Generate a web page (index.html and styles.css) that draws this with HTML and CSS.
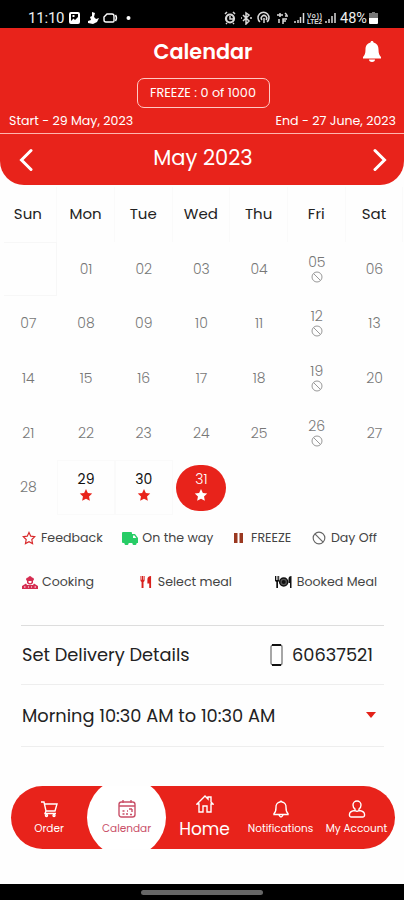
FILE: index.html
```html
<!DOCTYPE html>
<html lang="en">
<head>
<meta charset="utf-8">
<title>Calendar</title>
<link rel="stylesheet" href="styles.css">
</head>
<body>
<svg width="0" height="0" class="defs">
  <symbol id="star" viewBox="0 0 24 24"><path d="M12 1.500l3.200 6.900 7.500.9-5.500 5.200 1.400 7.500L12 18.300 5.400 22l1.400-7.500L1.300 9.300l7.500-.9z"/></symbol>
  <symbol id="off" viewBox="0 0 24 24"><circle cx="12" cy="12" r="10" fill="none" stroke="currentColor" stroke-width="2"/><path d="M5 5l14 14" stroke="currentColor" stroke-width="2"/></symbol>
</svg>
<div class="status">
  <span class="time">11:10</span>
  <svg class="st-left" viewBox="0 0 66 14" width="66" height="14">
    <path fill="#fff" fill-rule="evenodd" d="M3 1h7q2 0 2 2v8q0 2-2 2H3q-2 0-2-2V3q0-2 2-2zM3 3v7l2.500-2.500L7 9l3-3V3zM4.500 4h2v2h-2z"/>
    <path fill="#fff" d="M24 1l3 1-1 4 2 2 3-1-2 4-4 2-5-1v-2l3-1-1-3 2-1z"/>
    <path fill="none" stroke="#fff" stroke-width="1.400" d="M39 3h5q2 0 2 2v5q0 1-1 1h-7q-2 0-2-2V6zM47.500 4q2 3 0 6"/>
    <circle cx="60.500" cy="7" r="2" fill="#fff"/>
  </svg>
  <svg class="st-right" viewBox="0 0 114 14" width="114" height="14">
    <g fill="none" stroke="#fff" stroke-width="1.500">
      <circle cx="6" cy="7.500" r="4" stroke-width="2.200"/><path d="M1 3l2-2M11 3L9 1M6 5v3h3M2 13l1-1M10 13l-1-1"/>
      <path d="M19 4l6 6-3 3V2l3 2-6 6M17 7h1M26 7h2"/>
      <path d="M36 11a5.500 5.500 0 1 1 7 0M38 9a2.700 2.700 0 1 1 4 0M40 7v5"/>
      <path d="M56 2v4M53 4h6M61 2l2 2M55 8v4M59 13V8h4M59 10h3M61 5h3"/>
      <path d="M71 12v-2M74 12V9M76.500 12V6M79.500 12V2"/>
      <path d="M102 12v-2M105 12V8M108 12V5M111 12V2"/>
    </g>
    <text x="83" y="7" font-size="6.500" font-weight="700" fill="#fff" textLength="15">Vo))</text>
    <text x="83" y="13" font-size="6.500" font-weight="700" fill="#fff" textLength="15">LTE2</text>
  </svg>
  <span class="pct">48%</span>
  <svg class="bat" viewBox="0 0 9 13" width="9" height="13"><path fill="#777" d="M3 0h3v1h3v5H0V1h3z"/><path fill="#fff" d="M0 6h9v5q0 1-1 1H1q-1 0-1-1z"/></svg>
</div>
<header class="header">
  <div class="titlebar">
    <h1>Calendar</h1>
    <svg class="bell" viewBox="0 0 20 22" width="20" height="22"><path fill="#fff" d="M10 0c1 0 1.500.7 1.500 1.500C15 2.300 16.500 5 16.500 8.500c0 4 1 6 2.500 7.500v1.500H1V16c1.500-1.500 2.500-3.500 2.500-7.500C3.500 5 5 2.300 8.500 1.500 8.500.7 9 0 10 0zM7 18.500h6c0 1.500-1 2.500-3 2.500s-3-1-3-2.500z"/></svg>
  </div>
  <div class="freeze"><span>FREEZE : 0 of 1000</span></div>
  <div class="range"><span class="start">Start - 29 May, 2023</span><span class="end">End - 27 June, 2023</span></div>
  <div class="month">
    <svg viewBox="0 0 14 24" width="14" height="24"><path d="M12 2.500L2.500 12l9.500 9.500"/></svg>
    <span>May 2023</span>
    <svg viewBox="0 0 14 24" width="14" height="24"><path d="M2 2.500l9.500 9.500L2 21.500"/></svg>
  </div>
</header>
<main>
  <div class="grid">
    <div class="dow">Sun</div><div class="dow">Mon</div><div class="dow">Tue</div><div class="dow">Wed</div><div class="dow">Thu</div><div class="dow">Fri</div><div class="dow">Sat</div>
    <div class="empty"></div><div>01</div><div>02</div><div>03</div><div>04</div><div class="two">05<svg><use href="#off"/></svg></div><div>06</div>
    <div>07</div><div>08</div><div>09</div><div>10</div><div>11</div><div class="two">12<svg><use href="#off"/></svg></div><div>13</div>
    <div>14</div><div>15</div><div>16</div><div>17</div><div>18</div><div class="two">19<svg><use href="#off"/></svg></div><div>20</div>
    <div>21</div><div>22</div><div>23</div><div>24</div><div>25</div><div class="two">26<svg><use href="#off"/></svg></div><div>27</div>
    <div>28</div><div class="two active">29<svg><use href="#star"/></svg></div><div class="two active">30<svg><use href="#star"/></svg></div><div class="today"><div class="two">31<svg><use href="#star"/></svg></div></div>
  </div>
  <div class="legend first">
    <div><svg viewBox="0 0 24 24" width="14" height="14"><path fill="none" stroke="#d8292b" stroke-width="2" d="M12 2.500l3 6.400 6.800.9-5 4.800 1.300 7L12 18.200 5.900 21.600l1.300-7-5-4.800 6.800-.9z"/></svg><span>Feedback</span></div>
    <div class="truck"><svg viewBox="0 0 16 13" width="16" height="13"><path fill="#27cc66" d="M1 0h8q1 0 1 1v1h3l3 4v5h-1.300a2.200 2.200 0 0 1-4.400 0H6.700a2.200 2.200 0 0 1-4.400 0H1q-1 0-1-1V1q0-1 1-1z"/><path fill="#fff" d="M11 3.500h1.500L14.300 6H11z"/></svg><span>On the way</span></div>
    <div><svg class="pause" viewBox="0 0 9 10" width="9" height="10"><path fill="#9a3820" d="M0 0h3.500v10H0zM5.500 0H9v10H5.500z"/></svg><span>FREEZE</span></div>
    <div><svg class="dayoff" width="14" height="14"><use href="#off"/></svg><span>Day Off</span></div>
  </div>
  <div class="legend second">
    <div class="cook"><svg viewBox="0 0 16 13" width="16" height="13"><path fill="#d52c50" fill-rule="evenodd" d="M4 3.500Q4 1.500 6 1.500q2-3 4 0 2 0 2 2L11 5v2q-3 3-6 0V5zM6.500 5v1.500q1.500 1.500 3 0V5zM0 13v-3l4-2.500 1 1.500h6l1-1.500 4 2.500v3zM2 10.500v1h1.500v-1zM6 10.500v1h1v-1zM9 10.500v1h1v-1zM12.500 10.500v1H14v-1z"/></svg><span>Cooking</span></div>
    <div class="meal"><svg viewBox="0 0 12 13" width="12" height="12"><path fill="#d8201d" d="M0 0h1v4h.600V0h1.300v4h.600V0h1v5q0 1-1.200 1.500V13H1.200V6.500Q0 6 0 5zM11.500 0v13h-2V8H7.500V4q0-4 4-4z"/></svg><span>Select meal</span></div>
    <div><svg viewBox="0 0 17 12" width="17" height="12"><path fill="#111" d="M0 0h1v4h.700V0h.800v4h.700V0h1v5L3 6v6H1.300V6L0 5zM16.500 0v12H15V7h-1.500V3q0-3 3-3z"/><circle cx="8.700" cy="6" r="4" fill="#555" stroke="#111" stroke-width="1.500"/><circle cx="8.700" cy="6" r="2" fill="#111"/></svg><span>Booked Meal</span></div>
  </div>
  <div class="row details"><span>Set Delivery Details</span><span class="phone"><svg viewBox="0 0 13 22" width="13" height="22"><rect x="1" y="1" width="11" height="20" rx="2" fill="none" stroke="#777" stroke-width="1.300"/><path stroke="#111" stroke-width="1.800" d="M2 1h9M2 21h9"/></svg><span>60637521</span></span></div>
  <div class="row slot"><span>Morning 10:30 AM to 10:30 AM</span><svg viewBox="0 0 10 6" width="10" height="6"><path fill="#e32219" d="M0 0h10L5 6z"/></svg></div>
</main>
<nav>
  <a><svg viewBox="0 0 18 18"><path d="M1 2h3l2 9h9l2-7H5M6 11l-1 2.500h11"/><circle cx="6.500" cy="15.500" r="1"/><circle cx="14" cy="15.500" r="1"/></svg><span>Order</span></a>
  <a class="sel"><svg viewBox="0 0 18 18"><rect x="1" y="2" width="16" height="15" rx="2.500"/><path d="M1 6h16M5 0v3M13 0v3M11 9h3M14 9v3M4.500 11h2M9 11h1M4.500 14h2M8 14h2M12 14.500h2"/></svg><span>Calendar</span></a>
  <a class="home"><svg viewBox="0 0 18 18"><path d="M1 9l8-8 3 3V2h3v5l2 2h-2v8h-4v-6H7v6H3V9z"/></svg><span>Home</span></a>
  <a><svg viewBox="0 0 18 18"><path d="M2 14.500v-1q2-1.500 2-6A5 5 0 0 1 8 2q1-1.500 2 0a5 5 0 0 1 4 5.500q0 4.500 2 6v1zM7 15q2 4 4 0"/></svg><span>Notifications</span></a>
  <a><svg viewBox="0 0 18 18"><path d="M9 1a4 4 0 0 1 4 4q0 2.500-2 4v1.500q5 .5 5.500 3.500.3 3-1.500 3H3q-1.800 0-1.500-3 .5-3 5.500-3.500V9Q5 7.500 5 5a4 4 0 0 1 4-4zM7 10.500q2 1.500 4 0"/></svg><span>My Account</span></a>
</nav>
<footer><i></i></footer>
</body>
</html>
```
FILE: styles.css
```css
* { box-sizing: border-box; }
body {
  margin: 0;
  width: 404px;
  height: 900px;
  overflow: hidden;
  display: flex;
  flex-direction: column;
  background: #fefefe;
  color: #222;
  font-family: Poppins, Inter, "Open Sans", sans-serif;
}
span, h1 { white-space: nowrap; }
svg { flex: none; }
.defs { position: absolute; }

.status {
  height: 28px;
  flex: none;
  background: #000;
  color: #eee;
  display: flex;
  align-items: center;
  padding: 8px 25px 0 28px;
  font-family: Roboto, sans-serif;
}
.time { font-size: 15px; width: 40px; letter-spacing: -.2px; }
.st-right { margin-left: 90px; font-family: "Liberation Sans", sans-serif; opacity: .85; }
.pct { font-size: 14.500px; margin-left: 2px; }
.bat { margin-left: 2px; }

.header {
  height: 156.500px;
  flex: none;
  background: #e8231b;
  color: #fff;
  border-radius: 0 0 24px 24px;
  display: flex;
  flex-direction: column;
}
.titlebar {
  height: 50px;
  display: grid;
  grid-template-columns: 1fr auto 1fr;
  align-items: center;
  padding: 0 22px 2px;
}
h1 { grid-column: 2; margin: 0 0 0 2px; font-size: 20.800px; font-weight: 600; line-height: 30px; }
.bell { justify-self: end; }
.freeze {
  width: 133px;
  height: 30px;
  margin: 0 auto;
  position: relative;
  left: 1px;
  border: 1px solid #ffc9c4;
  border-radius: 7px;
  font-size: 12.800px;
  display: flex;
  align-items: center;
  justify-content: center;
}
.range {
  height: 26px;
  display: flex;
  justify-content: space-between;
  align-items: center;
  padding: 2px 8px 0 9px;
  border-bottom: 1px solid #ffb5af;
  font-size: 12.600px;
}
.month {
  height: 51px;
  display: flex;
  align-items: center;
  justify-content: space-between;
  padding: 1px 17px 0 19px;
  font-size: 21px;
}
.month svg { fill: none; stroke: #fff; stroke-width: 3; stroke-linecap: round; }
.month span { position: relative; top: -2px; }

main { flex: 1; }
.grid {
  display: grid;
  grid-template-columns: repeat(7, 57.700px);
  grid-auto-rows: 54.700px;
  margin: 2.500px 0 0 -.5px;
  font-size: 14px;
  font-weight: 300;
  color: #777;
}
.grid > div { display: flex; align-items: center; justify-content: center; }
.grid .dow { color: #222; font-size: 15px; font-weight: 400; border-right: 1px solid #fafafa; padding-bottom: 2px; }
.grid .empty { border: solid #f7f7f7; border-width: 1px 1px 1px 0; margin-left: 4px; }
.grid .two { display: flex; flex-direction: column; align-items: center; justify-content: center; line-height: 17px; padding-bottom: 2px; }
.two svg { width: 12px; height: 12px; color: #999; }
.grid .active { color: #111; font-weight: 400; border: 1px solid #fafafa; }
.active svg { fill: #e8231b; width: 14px; height: 14px; }
.today .two { width: 50px; height: 46px; border-radius: 23px; background: #e8231b; color: #fff; }
.today svg { fill: #fff; width: 14px; height: 14px; }

.legend {
  height: 44px;
  display: flex;
  justify-content: space-between;
  align-items: center;
  padding: 0 27px 0 22px;
  font-size: 12.600px;
  color: #444;
}
.legend.first { margin-top: 1px; }
.legend > div { display: flex; align-items: center; gap: 5px; }
.legend .truck { gap: 4px; margin-left: -1px; }
.legend .cook { gap: 4px; }
.legend .meal { gap: 6px; margin-left: 3px; }
.legend .pause { margin-right: 3px; }
.legend .dayoff { color: #666; }

.row {
  margin: 0 20px 0 21px;
  display: flex;
  align-items: center;
  justify-content: space-between;
  border-bottom: 1px solid #eee;
  font-size: 17.800px;
}
.details { height: 60px; margin-top: 20.500px; border-top: 1px solid #ddd; padding: 0 11px 0 1px; }
.slot { height: 62px; padding: 0 8px 0 1px; }
.phone { display: flex; align-items: center; gap: 9px; }

nav {
  width: 384px;
  height: 63px;
  flex: none;
  margin: 0 0 35px 11px;
  border-radius: 32px;
  background: #e8231b;
  color: #fff;
  overflow: hidden;
  display: grid;
  grid-template-columns: 76px 79px 77px 75px 77px;
}
nav a { display: flex; flex-direction: column; align-items: center; padding-top: 14px; font-size: 10.500px; }
nav svg { width: 18px; height: 18px; fill: none; stroke: currentColor; stroke-width: 1.400; }
nav span { line-height: 18px; margin-top: 2px; }
nav .sel { width: 79px; height: 79px; margin-top: -8px; padding-top: 22px; border-radius: 50%; background: #fff; color: #c95068; }
nav .home { padding-top: 9px; font-size: 17px; }
nav .home span { line-height: 26px; margin-top: 3px; }

footer { height: 16px; flex: none; background: #000; display: flex; justify-content: center; padding-top: 6px; }
footer i { width: 122px; height: 5px; border-radius: 3px; background: #666; }
```
